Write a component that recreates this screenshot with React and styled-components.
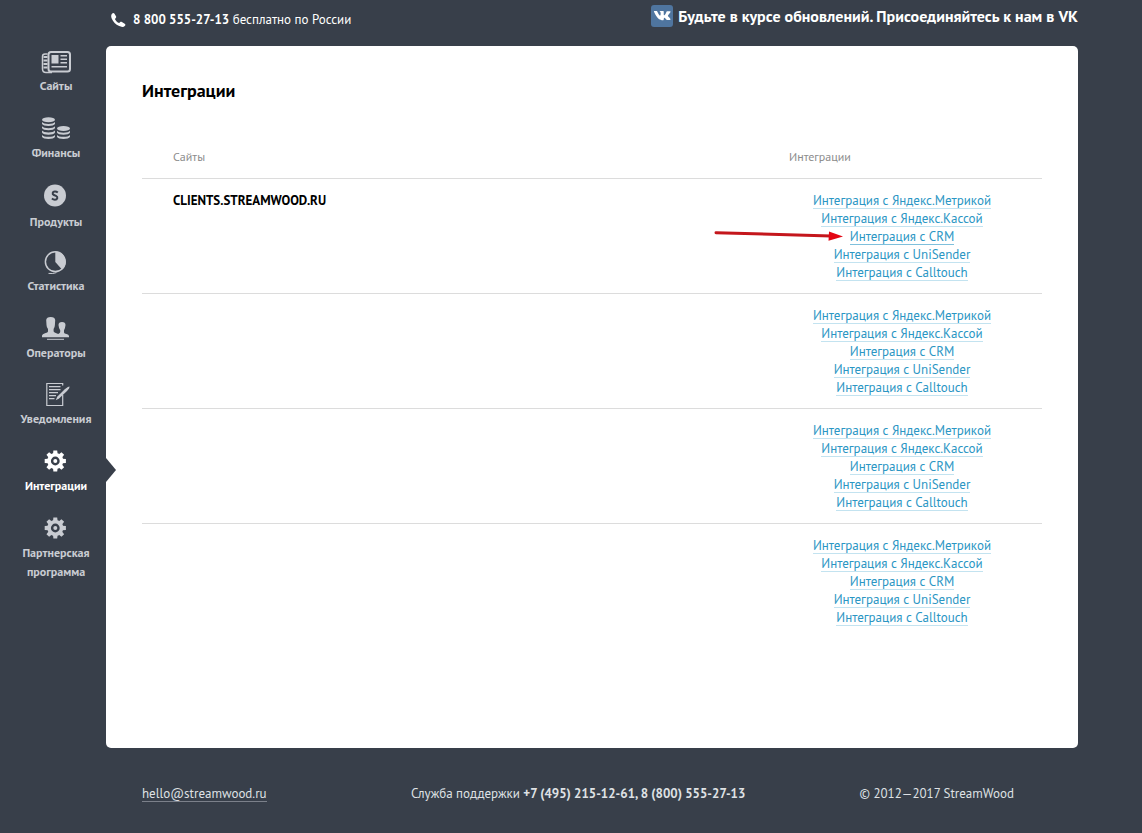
import React from "react";
import styled, { createGlobalStyle, css } from "styled-components";

const GlobalStyle = createGlobalStyle`
  * { box-sizing: border-box; }
  body {
    margin: 0;
    background: #383f4a;
    color: #000;
    font: 13px/18px "PT Sans", "Noto Sans", "Open Sans", sans-serif;
  }
`;

const Page = styled.div`
  display: flex;
  flex-direction: column;
  min-height: 100vh;
`;

const TopBar = styled.header`
  display: flex;
  flex-wrap: wrap;
  justify-content: space-between;
  align-items: flex-start;
  min-height: 46px;
  padding: 5px 64px 0 110px;
  color: #fff;
`;

const Phone = styled.p`
  display: flex;
  align-items: center;
  gap: 7px;
  margin: 6px 0 0;
`;

const VkLink = styled.a`
  display: flex;
  align-items: center;
  gap: 5px;
  color: #fff;
  font-size: 16px;
  font-weight: 700;
  line-height: 22px;
  text-decoration: none;
`;

const Body = styled.div`
  display: grid;
  grid-template-columns: 106px minmax(0, 1fr);
  flex: 1;
  padding-right: 64px;
`;

const Sidebar = styled.nav`
  padding: 2px 0 0 6px;
`;

const Menu = styled.ul`
  margin: 0;
  padding: 0;
  list-style: none;
`;

const MenuItem = styled.li`
  position: relative;
  margin-bottom: 20px;
  ${({ $active }) =>
    $active &&
    css`
      &::after {
        content: "";
        position: absolute;
        top: 10px;
        left: 100%;
        border: solid transparent;
        border-width: 12px 0 12px 10px;
        border-left-color: #383f4a;
        z-index: 1;
      }
    `}
`;

const MenuLink = styled.a`
  display: flex;
  flex-direction: column;
  align-items: center;
  gap: 2px;
  color: ${({ $active }) => ($active ? "#fff" : "#c9ccd2")};
  font-size: 12px;
  font-weight: 700;
  line-height: 19px;
  text-align: center;
  text-decoration: none;
`;

const Panel = styled.main`
  padding: 34px 36px;
  background: #fff;
  border-radius: 5px;
`;

const Title = styled.h1`
  margin: 0 0 46px;
  font-size: 18px;
  line-height: 22px;
`;

const Table = styled.table`
  width: 100%;
  border-collapse: separate;
  border-spacing: 0;
  table-layout: fixed;
`;

const HeadCell = styled.th`
  width: ${({ $width }) => $width || "auto"};
  padding: 0 0 12px ${({ $indent }) => $indent}px;
  border-bottom: 1px solid #dcdcdc;
  color: #8c8c8c;
  font-size: 12px;
  font-weight: 400;
  text-align: left;
`;

const Cell = styled.td`
  padding: 13px 0 11px ${({ $indent }) => $indent || 0}px;
  border-bottom: 1px solid #dcdcdc;
  vertical-align: top;
  tr:last-child > & {
    border-bottom: 0;
  }
`;

const SiteName = styled.strong`
  text-transform: uppercase;
`;

const LinkList = styled.ul`
  margin: 0;
  padding: 0;
  list-style: none;
  text-align: center;
`;

const LinkRow = styled.li`
  height: 18px;
`;

const IntegrationLink = styled.a`
  display: inline-block;
  position: relative;
  height: 17px;
  border-bottom: 1px solid ${({ $pointed }) => ($pointed ? "#7fc0dc" : "#c3e3f0")};
  color: #2b96c4;
  line-height: 18px;
  text-decoration: none;
  vertical-align: top;
`;

const Pointer = styled.svg`
  position: absolute;
  top: 0;
  right: 100%;
  margin-right: 7px;
`;

const Footer = styled.footer`
  display: grid;
  grid-template-columns: 3fr 5fr auto;
  align-items: start;
  min-height: 85px;
  padding: 37px 128px 0 142px;
  color: #dfe1e4;
`;

const MailLink = styled.a`
  justify-self: start;
  height: 17px;
  border-bottom: 1px solid #7b808a;
  color: inherit;
  text-decoration: none;
`;

function PhoneIcon() {
  return (
    <svg width="16" height="16" viewBox="0 0 16 16" fill="#fff" aria-hidden="true">
      <path d="M2.2 1.6C3 .8 4 .9 4.500 1.700L6 4.300C6.400 5 6.200 5.700 5.600 6.200L4.900 6.900C5.700 8.700 7.300 10.300 9.200 11.100L10 10.300C10.600 9.700 11.300 9.700 11.900 10.100L14.700 11.700C15.600 12.300 15.600 13 15 13.700C13.700 15.200 11.500 15.200 9.200 14.100C5.700 12.500 3 9.700 1.700 6.500C.9 4.500 1 2.800 2.200 1.600Z" />
    </svg>
  );
}

function VkIcon() {
  return (
    <svg width="22" height="22" viewBox="0 0 22 22" aria-hidden="true">
      <rect width="22" height="22" rx="3" fill="#4f759f" />
      <path
        fill="#fff"
        transform="translate(1.500 1.300) scale(.9)"
        d="M10.700 15.400h1.100s.4 0 .5-.3c.2-.2.200-.6.200-.6s0-1.500.7-1.700c.7-.2 1.500 1.500 2.400 2.100.7.500 1.200.4 1.200.4h2.400s1.200-.1.700-1.100c-.1-.1-.4-.9-1.800-2.200-1.500-1.400-1.300-1.200.5-3.600 1.100-1.400 1.500-2.300 1.400-2.700-.1-.4-.9-.3-.9-.3h-2.700s-.2 0-.4.1-.3.4-.3.400-.4 1.100-1 2.100c-1.200 2-1.700 2.200-1.900 2-.4-.3-.3-1.200-.3-1.800 0-2 .3-2.800-.6-3-.3-.1-.5-.1-1.300-.1-1 0-1.800 0-2.300.2-.3.200-.6.500-.4.500.2 0 .6.1.8.4.3.4.3 1.300.3 1.300s.2 2.400-.4 2.700c-.4.200-1-.2-2.200-2.300-.6-1.100-1.100-2.200-1.100-2.200s-.1-.2-.2-.3c-.2-.2-.5-.2-.5-.2H2.100s-.4 0-.5.2c-.1.100 0 .4 0 .4s2 4.700 4.300 7.100c2.100 2.200 4.800 2.500 4.800 2.500z"
      />
    </svg>
  );
}

function MenuIcon({ height, children }) {
  return (
    <svg width="32" height={height} viewBox={`0 0 32 ${height}`} fill="currentColor" aria-hidden="true" overflow="visible">
      {children}
    </svg>
  );
}

function NewsIcon() {
  return (
    <MenuIcon height={26}>
      <rect x="8.500" y="4" width="21.500" height="19.500" rx="2.500" fill="none" stroke="currentColor" strokeWidth="2" />
      <path d="M7.500 6H5Q2.500 6 2.500 8.500V21Q2.500 24.500 6 24.500H12" fill="none" stroke="currentColor" strokeWidth="1.500" />
      <path d="M5.500 8V22" fill="none" stroke="currentColor" strokeWidth="4" strokeDasharray="2 1.500" />
      <path d="M11.500 7h7v8.500h-7zM20.500 7h6.500v1.500h-6.500zM20.500 10.500h6.500V12h-6.500zM20.500 14h6.500v1.500h-6.500zM11.500 18h15.500v1.500H11.500z" />
    </MenuIcon>
  );
}

function CoinsIcon() {
  const rim = (x, y) => (
    <path
      key={`${x}-${y}`}
      d={`M${x - 6.5} ${y}C${x - 5} ${y + 2.6} ${x + 5} ${y + 2.6} ${x + 6.5} ${y}V${y + 1.8}C${x + 5.5} ${y + 4.8} ${x - 5.5} ${y + 4.8} ${x - 6.5} ${y + 1.8}Z`}
    />
  );
  return (
    <MenuIcon height={26}>
      <ellipse cx="8.500" cy="4.800" rx="6.500" ry="2.500" />
      <ellipse cx="23.500" cy="13.600" rx="6.500" ry="2.500" />
      {[7, 11.3, 15.6, 19.9].map((y) => rim(8.5, y))}
      {[15.8, 19.9].map((y) => rim(23.5, y))}
    </MenuIcon>
  );
}

function ProductIcon() {
  return (
    <MenuIcon height={28}>
      <circle cx="15" cy="13.500" r="11" />
      <path d="M17.800 10.400Q16.500 9.300 14.800 9.400C12.400 9.500 11.900 12.100 13.900 13L16 13.900C18.300 15 17.500 17.600 14.900 17.700Q13.200 17.700 11.900 16.600" fill="none" stroke="#383f4a" strokeWidth="2" />
    </MenuIcon>
  );
}

function ChartIcon() {
  return (
    <MenuIcon height={23}>
      <circle cx="15.300" cy="10.700" r="9.900" fill="none" stroke="currentColor" strokeWidth="1.500" />
      <path d="M15.300 .5A10.200 10.200 0 0 1 22 18.400L15.300 11Z" />
      <path d="M8.500 22.400Q13 23 16.500 21.600" fill="none" stroke="currentColor" />
    </MenuIcon>
  );
}

function PeopleIcon() {
  return (
    <MenuIcon height={26}>
      <path d="M2 22.300V20.500Q2.300 19 5 18.300Q8 17.500 8 16.500V14Q6.600 12.500 6.500 10L6.200 5Q6.500 2.100 10.700 2.100T15.200 5L14.900 10Q14.800 12.500 13.600 14V16.500Q14 17.500 17 18.500L18.200 19Q20.200 18.200 20.200 17V15.200Q18.800 13.500 18.500 10Q18.500 7 22 7T25.500 10Q25.200 13.500 24 15.200V17.500Q24.200 18.500 26.500 19.100T29 21V22.300Z" />
      <path d="M7 23.800h17v1H7z" />
    </MenuIcon>
  );
}

function NoteIcon() {
  return (
    <MenuIcon height={25}>
      <path d="M22.700 3.500V1.500H6.800V23.500H22.700V13" fill="none" stroke="currentColor" strokeWidth="1.200" />
      <path d="M9 4h11.500v1.200H9zM9 7h11.500v1.200H9zM9 10h9v1.200H9zM9 13h7v1.200H9zM9 16h5.500v1.200H9z" />
      <path d="M29.500 4.500Q29.800 6 27 9L19 16.500L15.800 18.200L17.200 14.800L24.500 7.500Q28 4.500 29.500 4.500Z" />
    </MenuIcon>
  );
}

function GearIcon() {
  return (
    <MenuIcon height={26}>
      {[0, 45, 90, 135, 180, 225, 270, 315].map((angle) => (
        <path key={angle} d="M13 6L13.400 2.400H17.200L17.600 6Z" transform={`rotate(${angle} 15.300 13)`} />
      ))}
      <circle cx="15.300" cy="13" r="6.200" fill="none" stroke="currentColor" strokeWidth="3.600" />
      <circle cx="15.300" cy="13" r="2" />
    </MenuIcon>
  );
}

const menu = [
  { label: "Сайты", Icon: NewsIcon },
  { label: "Финансы", Icon: CoinsIcon },
  { label: "Продукты", Icon: ProductIcon },
  { label: "Статистика", Icon: ChartIcon },
  { label: "Операторы", Icon: PeopleIcon },
  { label: "Уведомления", Icon: NoteIcon },
  { label: "Интеграции", Icon: GearIcon, active: true },
  { label: "Партнерская программа", Icon: GearIcon },
];

const services = ["Яндекс.Метрикой", "Яндекс.Кассой", "CRM", "UniSender", "Calltouch"];
const sites = ["clients.streamwood.ru", "", "", ""];

function PointerArrow() {
  return (
    <Pointer width="130" height="16" viewBox="0 0 130 16" aria-hidden="true">
      <path d="M3 4.700L118 8" stroke="#c4161c" strokeWidth="3" strokeLinecap="round" />
      <path d="M116 3.500L130 8.500L115.500 12.800Z" fill="#e30613" />
    </Pointer>
  );
}

function SiteRow({ name, pointed }) {
  return (
    <tr>
      <Cell $indent={31}>{name && <SiteName>{name}</SiteName>}</Cell>
      <Cell>
        <LinkList>
          {services.map((service) => {
            const marked = pointed === service;
            return (
              <LinkRow key={service}>
                <IntegrationLink href="#" $pointed={marked}>
                  Интеграция с {service}
                  {marked && <PointerArrow />}
                </IntegrationLink>
              </LinkRow>
            );
          })}
        </LinkList>
      </Cell>
    </tr>
  );
}

export default function App() {
  return (
    <Page>
      <GlobalStyle />
      <TopBar>
        <Phone>
          <PhoneIcon />
          <span>
            <strong>8 800 555-27-13</strong> бесплатно по России
          </span>
        </Phone>
        <VkLink href="#">
          <VkIcon />
          Будьте в курсе обновлений. Присоединяйтесь к нам в VK
        </VkLink>
      </TopBar>
      <Body>
        <Sidebar>
          <Menu>
            {menu.map(({ label, Icon, active }) => (
              <MenuItem key={label} $active={active}>
                <MenuLink href="#" $active={active}>
                  <Icon />
                  {label}
                </MenuLink>
              </MenuItem>
            ))}
          </Menu>
        </Sidebar>
        <Panel>
          <Title>Интеграции</Title>
          <Table>
            <thead>
              <tr>
                <HeadCell $indent={31}>Сайты</HeadCell>
                <HeadCell $indent={27} $width="280px">Интеграции</HeadCell>
              </tr>
            </thead>
            <tbody>
              {sites.map((name, index) => (
                <SiteRow key={index} name={name} pointed={index === 0 ? "CRM" : null} />
              ))}
            </tbody>
          </Table>
        </Panel>
      </Body>
      <Footer>
        <MailLink href="#">hello@streamwood.ru</MailLink>
        <span>
          Служба поддержки <strong>+7 (495) 215-12-61, 8 (800) 555-27-13</strong>
        </span>
        <span>© 2012—2017 StreamWood</span>
      </Footer>
    </Page>
  );
}
